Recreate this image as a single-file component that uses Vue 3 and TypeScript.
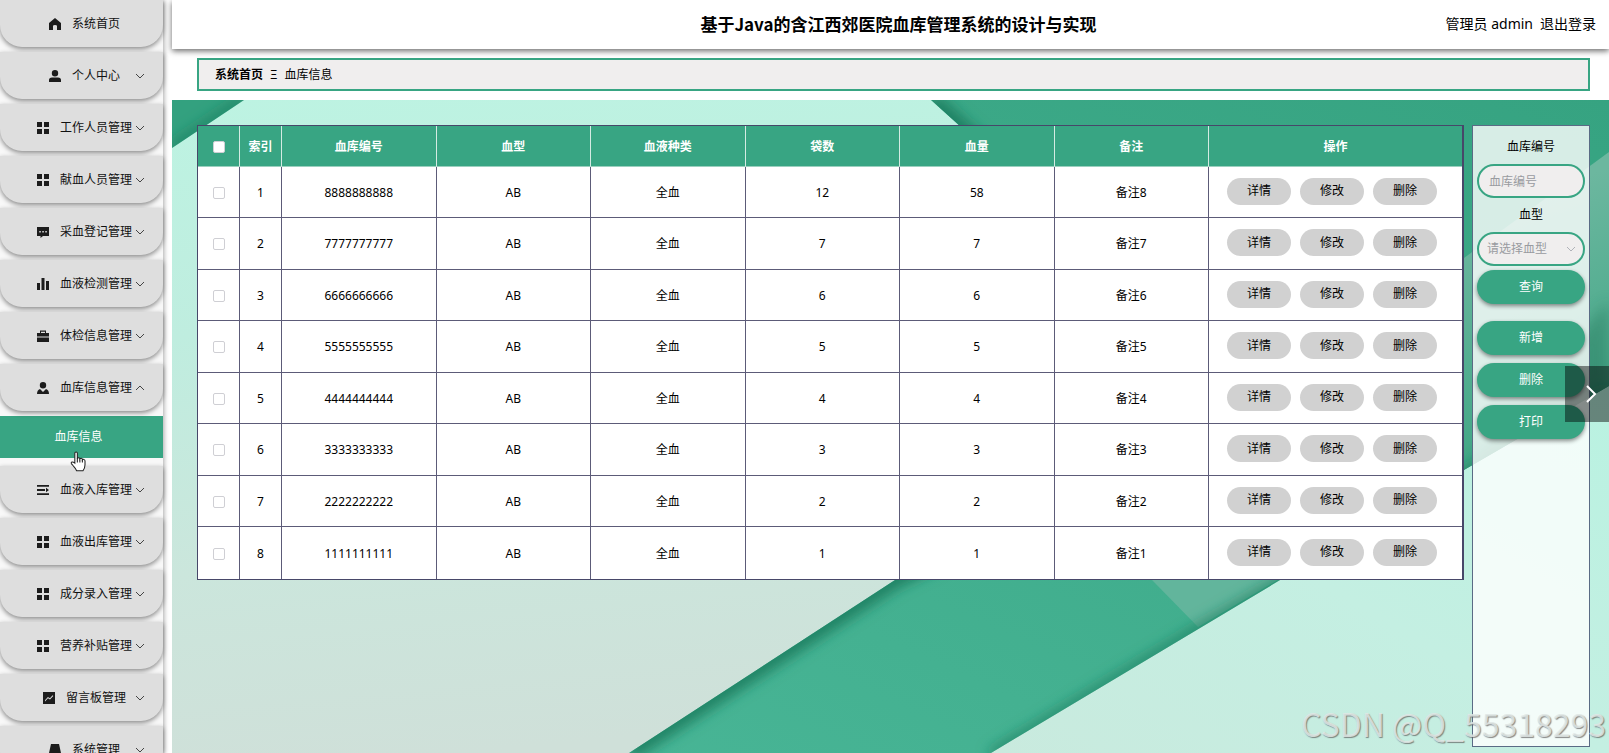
<script setup lang="ts">
import { ref } from 'vue'

type IconName = 'home' | 'user' | 'grid' | 'chat' | 'bars' | 'case' | 'doctor' | 'list' | 'trend' | 'trapezoid'

interface MenuItem {
  label: string
  icon: IconName
  expandable: boolean
  children?: string[]
}

interface StockRow {
  index: number
  code: string
  type: string
  kind: string
  bags: number
  amount: number
  note: string
}

const menu: MenuItem[] = [
  { label: '系统首页', icon: 'home', expandable: false },
  { label: '个人中心', icon: 'user', expandable: true },
  { label: '工作人员管理', icon: 'grid', expandable: true },
  { label: '献血人员管理', icon: 'grid', expandable: true },
  { label: '采血登记管理', icon: 'chat', expandable: true },
  { label: '血液检测管理', icon: 'bars', expandable: true },
  { label: '体检信息管理', icon: 'case', expandable: true },
  { label: '血库信息管理', icon: 'doctor', expandable: true, children: ['血库信息'] },
  { label: '血液入库管理', icon: 'list', expandable: true },
  { label: '血液出库管理', icon: 'grid', expandable: true },
  { label: '成分录入管理', icon: 'grid', expandable: true },
  { label: '营养补贴管理', icon: 'grid', expandable: true },
  { label: '留言板管理', icon: 'trend', expandable: true },
  { label: '系统管理', icon: 'trapezoid', expandable: true },
]

const icons: Record<IconName, string> = {
  home: 'M6 0 L12 5 V12 H8 V8 Q8 7 6 7 Q4 7 4 8 V12 H0 V5 Z',
  user: 'M6 0 A3.2 3.2 0 0 1 6 6.4 A3.2 3.2 0 0 1 6 0 Z M3 7.5 H9 Q12 7.5 12 10 V12 H0 V10 Q0 7.5 3 7.5 Z',
  grid: 'M0 0 H5 V5 H0 Z M7 0 H12 V5 H7 Z M0 7 H5 V12 H0 Z M7 7 H12 V12 H7 Z',
  chat: 'M0 1 H12 V10 H6 L3.5 12 V10 H0 Z M2.3 5 V6.5 H3.8 V5 Z M5.3 5 V6.5 H6.8 V5 Z M8.3 5 V6.5 H9.8 V5 Z',
  bars: 'M0 5 H3 V12 H0 Z M4.5 0 H7.5 V12 H4.5 Z M9 3 H12 V12 H9 Z',
  case: 'M3 3 V0.5 H9 V3 H12 V6.5 H0 V3 Z M4 1.7 V3 H8 V1.7 Z M0 7.5 H12 V12 H0 Z',
  doctor: 'M6 0 A3.2 3.2 0 0 1 6 6.4 A3.2 3.2 0 0 1 6 0 Z M3 7 L6 10 L9 7 Q12 8 12 12 H0 Q0 8 3 7 Z',
  list: 'M0 1 H12 V2.8 H0 Z M0 5.1 H8 V6.9 H0 Z M9 3.8 V8.2 L12 6 Z M0 9.2 H12 V11 H0 Z',
  trend: 'M0 0 H12 V12 H0 Z M2 9.5 L5 6.2 L7 7.6 L10.3 4 L9.6 3.3 L6.9 6.2 L4.9 4.9 L2 8.3 Z',
  trapezoid: 'M2 0 H10 L12 9 V12 H0 V9 Z',
}

const rows: StockRow[] = [8, 7, 6, 5, 4, 3, 2, 1].map((n, i) => ({
  index: i + 1,
  code: String(n).repeat(10),
  type: 'AB',
  kind: '全血',
  bags: n === 8 ? 12 : n,
  amount: n === 8 ? 58 : n,
  note: `备注${n}`,
}))

const columns = ['血库编号', '血型', '血液种类', '袋数', '血量', '备注']
const rowActions = ['详情', '修改', '删除']
const bulkActions = ['新增', '删除', '打印']
const bloodTypes = ['A', 'B', 'AB', 'O']

const code = ref('')
const bloodType = ref('')
const checked = ref<number[]>([])
</script>

<template>
  <div class="app">
    <nav class="sidebar" aria-label="主菜单">
      <template v-for="item in menu" :key="item.label">
        <button class="menu-item" type="button">
          <svg class="menu-icon" viewBox="0 0 12 12" aria-hidden="true">
            <path :d="icons[item.icon]" fill-rule="evenodd" />
          </svg>
          <span class="menu-label">{{ item.label }}</span>
          <svg v-if="item.expandable" class="menu-arrow" viewBox="0 0 10 6" aria-hidden="true">
            <path :d="item.children ? 'M1 5 L5 1 L9 5' : 'M1 1 L5 5 L9 1'" />
          </svg>
        </button>
        <a v-for="child in item.children" :key="child" class="submenu" href="#">{{ child }}</a>
      </template>
      <svg class="cursor" viewBox="0 0 16 20" aria-hidden="true">
        <path d="M4.5 11.5 V2.2 Q4.5 1 5.7 1 Q6.9 1 6.9 2.2 V7.4 Q7.2 6.3 8.2 6.4 Q9.3 6.5 9.3 7.6 Q9.7 6.9 10.6 7 Q11.7 7.2 11.7 8.3 Q12.2 7.7 13.1 8 Q14.2 8.3 14.2 9.5 V13 Q14.2 16 12.3 18.8 H6.2 Q5.4 16.6 3.2 14.3 L1.2 12 Q0.7 11 1.7 10.5 Q2.7 10.1 4.5 11.5 Z" />
        <path d="M6.9 7 V11 M9.3 8 V11 M11.7 8.5 V11" />
      </svg>
    </nav>

    <div class="page">
      <header class="topbar">
        <h1 class="title">基于Java的含江西郊医院血库管理系统的设计与实现</h1>
        <div class="account">
          <span>管理员 admin</span>
          <a class="logout" href="#">退出登录</a>
        </div>
      </header>

      <div class="crumb-area">
        <div class="breadcrumb">
          <b>系统首页</b>
          <span class="crumb-sep">Ξ</span>
          <span>血库信息</span>
        </div>
      </div>

      <main class="content">
        <svg class="backdrop" viewBox="0 0 1437 653" preserveAspectRatio="none" aria-hidden="true">
          <defs>
            <linearGradient id="mint" x1="0" y1="0" x2="0.2" y2="1">
              <stop offset="0" stop-color="#bdf3e2" />
              <stop offset="0.35" stop-color="#bfeddf" />
              <stop offset="0.7" stop-color="#cbe6dc" />
              <stop offset="1" stop-color="#cfe0d9" />
            </linearGradient>
            <linearGradient id="band" x1="1" y1="0" x2="0" y2="1">
              <stop offset="0" stop-color="#36a381" />
              <stop offset="1" stop-color="#4bb899" />
            </linearGradient>
            <linearGradient id="facet" gradientUnits="userSpaceOnUse" x1="1350" y1="100" x2="1430" y2="310">
              <stop offset="0" stop-color="#6cb79f" />
              <stop offset="1" stop-color="#43a787" />
            </linearGradient>
            <linearGradient id="corner" x1="1" y1="0" x2="0" y2="1">
              <stop offset="0" stop-color="#b9f2e1" />
              <stop offset="0.5" stop-color="#c4efe2" />
              <stop offset="1" stop-color="#c9eade" />
            </linearGradient>
            <filter id="soft" x="-10%" y="-10%" width="120%" height="120%">
              <feGaussianBlur stdDeviation="7" />
            </filter>
            <clipPath id="bandClip">
              <path d="M759 0 H1437 V286 L1292 370 L819 653 H457 L723 480 L1092 300 Z" />
            </clipPath>
            <clipPath id="tipClip"><path d="M0 0 H72 L0 48 Z" /></clipPath>
          </defs>
          <rect width="1437" height="653" fill="url(#mint)" />
          <path d="M0 0 H72 L0 48 Z" fill="#33a17f" />
          <path d="M72 0 L0 48" stroke="#1f7d5f" stroke-width="8" filter="url(#soft)" clip-path="url(#tipClip)" />
          <path d="M1437 286 L1292 370 L819 653 H1437 Z" fill="url(#corner)" />
          <g clip-path="url(#bandClip)">
            <rect width="1437" height="653" fill="url(#band)" />
            <path d="M1437 52 L1292 158 V370 L1437 286 Z" fill="url(#facet)" />
            <path d="M980 480 L1026 527 L1292 370 V300 Z" fill="#62b59c" />
            <path d="M1437 200 V286 L1292 375 Z" fill="#2b7e62" opacity="0.5" filter="url(#soft)" />
            <path d="M759 0 L1092 300 L723 480 L457 653" class="edge" />
            <path d="M1437 290 L1026 530 L819 655" class="edge faint" />
          </g>
        </svg>

        <table class="stock">
          <colgroup>
            <col class="col-narrow" />
            <col class="col-narrow" />
            <col v-for="c in columns" :key="c" />
            <col class="col-actions" />
          </colgroup>
          <thead>
            <tr>
              <th><input type="checkbox" aria-label="全选" /></th>
              <th>索引</th>
              <th v-for="c in columns" :key="c">{{ c }}</th>
              <th>操作</th>
            </tr>
          </thead>
          <tbody>
            <tr v-for="row in rows" :key="row.index">
              <td><input v-model="checked" type="checkbox" :value="row.index" :aria-label="row.code" /></td>
              <td>{{ row.index }}</td>
              <td>{{ row.code }}</td>
              <td>{{ row.type }}</td>
              <td>{{ row.kind }}</td>
              <td>{{ row.bags }}</td>
              <td>{{ row.amount }}</td>
              <td>{{ row.note }}</td>
              <td>
                <div class="row-actions">
                  <button v-for="a in rowActions" :key="a" type="button">{{ a }}</button>
                </div>
              </td>
            </tr>
          </tbody>
        </table>

        <form class="filter" @submit.prevent>
          <label for="code">血库编号</label>
          <input id="code" v-model="code" class="field" type="text" placeholder="血库编号" />
          <label for="blood">血型</label>
          <div class="select-wrap">
            <select id="blood" v-model="bloodType" class="field">
              <option value="">请选择血型</option>
              <option v-for="t in bloodTypes" :key="t">{{ t }}</option>
            </select>
            <svg class="select-arrow" viewBox="0 0 10 6" aria-hidden="true"><path d="M1 1 L5 5 L9 1" /></svg>
          </div>
          <button class="pill search" type="submit">查询</button>
          <button v-for="a in bulkActions" :key="a" class="pill" type="button">{{ a }}</button>
        </form>
      </main>
    </div>

    <button class="next" type="button" aria-label="下一张">
      <svg viewBox="0 0 12 20" aria-hidden="true"><path d="M2 2 L10 10 L2 18" /></svg>
    </button>
    <div class="watermark">CSDN @Q_55318293</div>
  </div>
</template>

<style>
body {
  overflow: hidden;
}
</style>

<style scoped>
.app {
  --green: #38a583;
  position: relative;
  display: flex;
  height: 100vh;
  overflow: hidden;
  background: #fff;
  color: #111;
  font-family: "Noto Sans", "Noto Sans CJK SC", sans-serif;
  font-size: 12px;
  line-height: 16px;
}

.app * {
  box-sizing: border-box;
}

button,
input,
select {
  font: inherit;
  color: inherit;
}

.sidebar {
  position: relative;
  flex: none;
  width: 163px;
  margin-right: 9px;
  background: #f8f8f8;
  box-shadow: 1px 0 5px rgba(0, 0, 0, 0.35);
}

.menu-item {
  position: relative;
  display: flex;
  align-items: center;
  justify-content: center;
  gap: 11px;
  width: 100%;
  height: 47px;
  margin: 0 0 5px;
  padding: 0 0 0 6px;
  border: 0;
  border-radius: 0 0 22px 22px;
  background: #dedede;
  box-shadow: 0 2px 5px rgba(0, 0, 0, 0.45);
}

.menu-icon {
  width: 12px;
  height: 12px;
  fill: #1c1c1c;
}

.menu-arrow {
  position: absolute;
  right: 18px;
  width: 10px;
  height: 6px;
  fill: none;
  stroke: #444;
}

.submenu {
  display: block;
  height: 42px;
  margin-bottom: 8px;
  padding-right: 6px;
  background: var(--green);
  color: #fff;
  line-height: 42px;
  text-align: center;
  text-decoration: none;
}

.cursor {
  position: absolute;
  top: 451px;
  left: 70px;
  width: 17px;
  height: 21px;
  fill: #fff;
  stroke: #222;
}

.page {
  display: flex;
  flex: 1;
  flex-direction: column;
  min-width: 0;
}

.topbar {
  position: relative;
  flex: none;
  height: 49px;
  background: #fff;
  box-shadow: 0 2px 6px rgba(0, 0, 0, 0.6);
}

.title {
  margin: 0;
  padding-left: 16px;
  color: #000;
  font-family: "Noto Sans CJK SC", sans-serif;
  font-size: 17px;
  line-height: 47px;
  text-align: center;
}

.account {
  position: absolute;
  top: 0;
  right: 13px;
  display: flex;
  gap: 7px;
  color: #000;
  font-size: 14px;
  line-height: 48px;
}

.logout {
  color: inherit;
  text-decoration: none;
}

.crumb-area {
  flex: none;
  padding: 9px 19px 9px 25px;
}

.breadcrumb {
  display: flex;
  gap: 7px;
  height: 33px;
  padding: 0 16px;
  border: 2px solid var(--green);
  background: #f0eeee;
  color: #000;
  line-height: 30px;
}

.content {
  position: relative;
  display: flex;
  flex: 1;
  align-items: flex-start;
  gap: 8px;
  min-height: 0;
  padding: 25px 19px 6px 25px;
}

.backdrop {
  position: absolute;
  inset: 0;
  width: 100%;
  height: 100%;
}

.edge {
  fill: none;
  stroke: #1f7d5f;
  stroke-width: 16;
  filter: url(#soft);
}

.faint {
  stroke-width: 8;
}

.stock {
  position: relative;
  flex: 1;
  width: 100%;
  min-width: 0;
  border: 1px solid #474769;
  border-right-width: 2px;
  border-spacing: 0;
  table-layout: fixed;
  background: #fff;
  color: #000;
  text-align: center;
}

.col-narrow {
  width: 42px;
}

.col-actions {
  width: 253px;
}

.stock th {
  height: 41px;
  padding: 1px 0 0;
  border-right: 1px solid #d4ebe3;
  border-bottom: 1px solid #9bd0bf;
  background: var(--green);
  color: #fff;
}

.stock td {
  height: 51px;
  padding: 1px 0 0;
  border-right: 1px solid #5c5b78;
  border-bottom: 1px solid #5c5b78;
}

.stock tbody tr:nth-child(even) td {
  height: 52px;
}

.stock tbody tr:last-child td {
  border-bottom: 0;
}

.stock th:last-child,
.stock td:last-child {
  border-right: 0;
}

.stock input {
  display: block;
  width: 12px;
  height: 12px;
  margin: 0 auto;
  appearance: none;
  border: 1px solid #cfcfd4;
  border-radius: 2px;
  background: #fff;
}

.row-actions {
  display: flex;
  gap: 9px;
  padding: 0 0 3px 18px;
}

.row-actions button {
  width: 64px;
  height: 27px;
  padding: 0;
  border: 0;
  border-radius: 14px;
  background: #d1d1d1;
  color: #000;
}

.filter {
  position: relative;
  display: flex;
  flex: none;
  flex-direction: column;
  align-self: stretch;
  width: 118px;
  padding: 4px 4px 0;
  border: 1px solid #5a6b85;
  background: rgba(255, 255, 255, 0.8);
}

.filter label {
  height: 34px;
  color: #000;
  line-height: 34px;
  text-align: center;
}

.field {
  display: block;
  width: 100%;
  height: 34px;
  padding: 0 10px;
  appearance: none;
  border: 2px solid var(--green);
  border-radius: 17px;
  background: #f0eeee;
  color: #999ba0;
}

select.field {
  padding: 0 8px;
}

.field::placeholder {
  color: #999ba0;
}

.select-wrap {
  position: relative;
}

.select-arrow {
  position: absolute;
  top: 14px;
  right: 9px;
  width: 10px;
  height: 6px;
  fill: none;
  stroke: #b0b2b8;
  pointer-events: none;
}

.pill {
  flex: none;
  height: 34px;
  margin-bottom: 8px;
  padding: 0;
  border: 0;
  border-radius: 17px;
  background: var(--green);
  box-shadow: 0 2px 4px rgba(0, 0, 0, 0.45);
  color: #fff;
}

.search {
  margin: 4px 0 17px;
}

.next {
  position: absolute;
  top: 366px;
  right: 0;
  width: 44px;
  height: 56px;
  padding: 0 0 0 8px;
  border: 0;
  background: rgba(0, 0, 0, 0.45);
}

.next svg {
  display: block;
  width: 12px;
  height: 20px;
  margin: 0 auto;
  fill: none;
  stroke: #fff;
  stroke-width: 2;
}

.watermark {
  position: absolute;
  right: 3px;
  bottom: 8px;
  color: rgba(225, 232, 230, 0.85);
  font-family: "Noto Sans CJK SC", sans-serif;
  font-size: 32px;
  line-height: 44px;
  text-shadow: 1px 1px 1px rgba(90, 90, 90, 0.7);
  white-space: nowrap;
  pointer-events: none;
}
</style>
